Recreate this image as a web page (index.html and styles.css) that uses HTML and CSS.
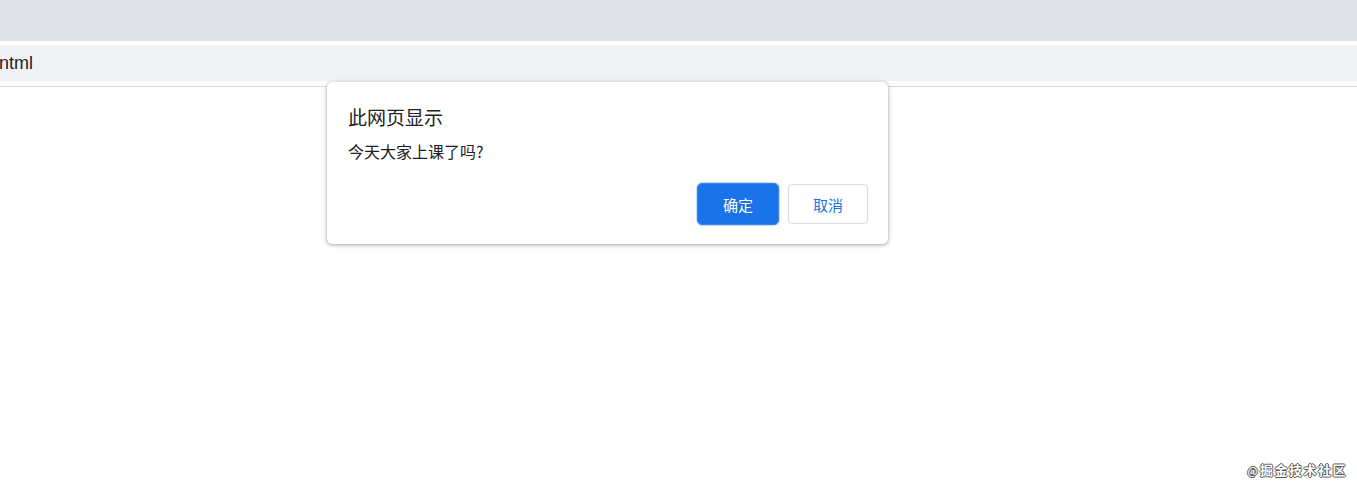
FILE: index.html
```html
<!DOCTYPE html>
<html lang="zh-CN">
<head>
<meta charset="utf-8">
<title>alert</title>
<link rel="stylesheet" href="styles.css">
</head>
<body>
<div class="tabstrip"></div>
<div class="toolbar">
  <div class="address">ntml</div>
</div>
<div class="divider"></div>
<main class="page"></main>

<div class="dialog" role="dialog">
  <div class="dialog-title">此网页显示</div>
  <div class="dialog-msg">今天大家上课了吗?</div>
  <div class="dialog-actions">
    <button class="btn btn-primary">确定</button>
    <button class="btn btn-secondary">取消</button>
  </div>
</div>

<div class="watermark"><span class="wm-at">@</span>掘金技术社区</div>
</body>
</html>
```
FILE: styles.css
```css
html, body {
  margin: 0;
  padding: 0;
  background: #ffffff;
  font-family: "Noto Sans CJK SC", "Noto Sans", sans-serif;
  color: #202124;
}
body {
  width: 1357px;
  height: 487px;
  overflow: hidden;
  position: relative;
}
.tabstrip {
  height: 41px;
  background: #dee1e6;
}
.toolbar {
  margin-top: 4px;
  height: 36px;
  background: #f0f2f4;
  display: flex;
  align-items: center;
}
.address {
  font-family: "Liberation Sans", Arial, sans-serif;
  font-size: 18px;
  color: #202124;
  line-height: 20px;
  margin-left: -1px;
}
.divider {
  margin-top: 5px;
  height: 1px;
  background: #d6d8da;
}
.dialog {
  position: absolute;
  left: 327px;
  top: 82px;
  width: 561px;
  height: 162px;
  box-sizing: border-box;
  background: #ffffff;
  border-radius: 5px;
  box-shadow: 0 1px 4px rgba(0, 0, 0, 0.35), 0 0 1px rgba(0, 0, 0, 0.25);
  padding: 23px 20px 0 21px;
  display: flex;
  flex-direction: column;
}
.dialog-title {
  font-size: 19px;
  line-height: 24px;
  color: #202124;
}
.dialog-msg {
  margin-top: 12px;
  font-size: 16px;
  line-height: 20px;
  color: #202124;
}
.dialog-actions {
  margin-top: 22px;
  display: flex;
  justify-content: flex-end;
  align-items: center;
  gap: 9px;
}
.btn {
  font-family: "Noto Sans CJK SC", "Noto Sans", sans-serif;
  font-size: 15px;
  box-sizing: border-box;
  border-radius: 5px;
  padding: 0;
  cursor: pointer;
}
.btn-primary {
  width: 82px;
  height: 42px;
  background: #1a73e8;
  color: #ffffff;
  border: 1px solid #3b82ea;
  box-shadow: 0 0 0 1px rgba(26, 115, 232, 0.25);
}
.btn-secondary {
  width: 80px;
  height: 40px;
  background: #ffffff;
  color: #1a73e8;
  border: 1px solid #dadce0;
  border-radius: 4px;
}
.watermark {
  position: absolute;
  right: 10px;
  bottom: 8px;
  font-size: 13px;
  line-height: 16px;
  font-weight: 700;
  color: #ffffff;
  letter-spacing: 1.5px;
  text-shadow: 1px 0 0 #555, -1px 0 0 #555, 0 1px 0 #555, 0 -1px 0 #555;
}
.wm-at {
  font-size: 10px;
  margin-right: 1px;
}
```
